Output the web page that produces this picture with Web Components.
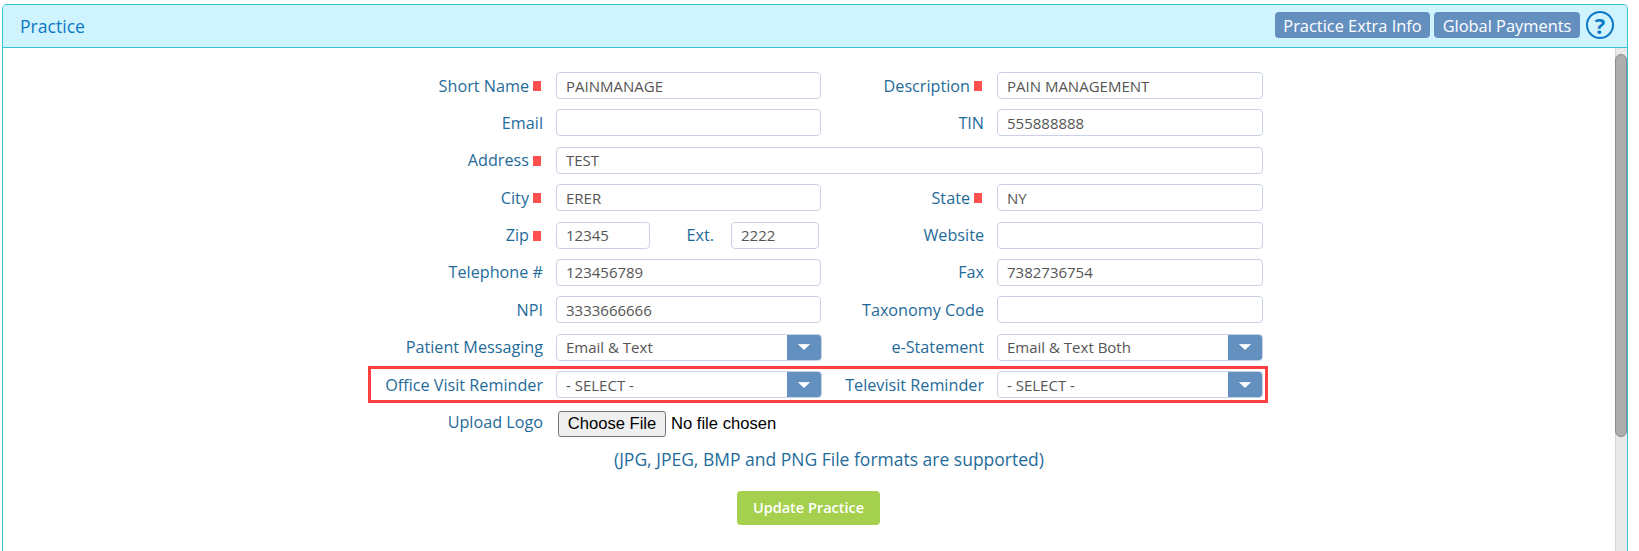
<!DOCTYPE html>
<html>
<head>
<meta charset="utf-8">
<title>Practice</title>
<style>
	html, body { margin: 0; height: 100%; overflow: hidden; background: #fff; }
	body { font-family: "Open Sans", sans-serif; }
</style>
</head>
<body>
<pm-panel>
	<span slot="title">Practice</span>
	<pm-button slot="actions" style="width:155px">Practice Extra Info</pm-button>
	<pm-button slot="actions" style="width:146px">Global Payments</pm-button>
	<pm-help slot="actions"></pm-help>

	<pm-form>
		<pm-row>
			<pm-field label="Short Name" required><pm-input>PAINMANAGE</pm-input></pm-field>
			<pm-field side="right" label="Description" required><pm-input style="width:265.5px">PAIN MANAGEMENT</pm-input></pm-field>
		</pm-row>
		<pm-row>
			<pm-field label="Email"><pm-input></pm-input></pm-field>
			<pm-field side="right" label="TIN"><pm-input style="width:265.5px">555888888</pm-input></pm-field>
		</pm-row>
		<pm-row>
			<pm-field label="Address" required><pm-input style="width:706.5px">TEST</pm-input></pm-field>
		</pm-row>
		<pm-row>
			<pm-field label="City" required><pm-input>ERER</pm-input></pm-field>
			<pm-field side="right" label="State" required><pm-input style="width:265.5px">NY</pm-input></pm-field>
		</pm-row>
		<pm-row>
			<pm-field label="Zip" required>
				<pm-input style="width:93.5px">12345</pm-input>
				<pm-label style="width:44.5px;margin-left:37px">Ext.</pm-label>
				<pm-input style="width:88px">2222</pm-input>
			</pm-field>
			<pm-field side="right" label="Website"><pm-input style="width:265.5px"></pm-input></pm-field>
		</pm-row>
		<pm-row>
			<pm-field label="Telephone #"><pm-input>123456789</pm-input></pm-field>
			<pm-field side="right" label="Fax"><pm-input style="width:265.5px">7382736754</pm-input></pm-field>
		</pm-row>
		<pm-row>
			<pm-field label="NPI"><pm-input>3333666666</pm-input></pm-field>
			<pm-field side="right" label="Taxonomy Code"><pm-input style="width:265.5px"></pm-input></pm-field>
		</pm-row>
		<pm-row>
			<pm-field label="Patient Messaging"><pm-select>Email &amp; Text</pm-select></pm-field>
			<pm-field side="right" label="e-Statement"><pm-select>Email &amp; Text Both</pm-select></pm-field>
		</pm-row>
		<pm-row>
			<pm-field label="Office Visit Reminder"><pm-select>- SELECT -</pm-select></pm-field>
			<pm-field side="right" label="Televisit Reminder"><pm-select>- SELECT -</pm-select></pm-field>
		</pm-row>
		<pm-row>
			<pm-field label="Upload Logo"><pm-file></pm-file></pm-field>
		</pm-row>
		<pm-note slot="footer">(JPG, JPEG, BMP and PNG File formats are supported)</pm-note>
		<pm-submit slot="footer">Update Practice</pm-submit>
	</pm-form>
	<pm-highlight slot="overlay"></pm-highlight>
</pm-panel>

<script>
class PmPanel extends HTMLElement {
	constructor() {
		super();
		this.attachShadow({ mode: "open" });
		this.shadowRoot.innerHTML = `
		<style>
			:host { display: flex; flex-direction: column; position: absolute; left: 2px; top: 4px; width: 1626px; height: 547px; box-sizing: border-box;
				border: 1px solid #33c4d6; border-bottom: 0; border-radius: 5px 5px 0 0; overflow: hidden; }
			header { display: flex; align-items: center; justify-content: space-between; flex: none; height: 43px; box-sizing: border-box;
				background: #cff3ff; border-bottom: 1px solid #33c4d6; padding: 0 13px 2px 17px; }
			.title { font-size: 17.6px; color: #0d78c4; margin-top: 2px; }
			.actions { display: flex; align-items: center; gap: 4px; }
			.main { display: flex; flex: 1; min-height: 0; position: relative; }
			.content { flex: 1; min-width: 0; padding-top: 24px; }
			.track { flex: none; width: 12px; box-sizing: border-box; background: #e9e9e9; border-left: 1px solid #d4d4d4; padding-top: 6px; }
			.thumb { height: 383px; box-sizing: border-box; background: #adadad; border: 1px solid #8c8c8c; border-radius: 6px; margin-left: -1px; }
		</style>
		<header>
			<div class="title"><slot name="title"></slot></div>
			<div class="actions"><slot name="actions"></slot></div>
		</header>
		<div class="main">
			<div class="content"><slot></slot></div>
			<div class="track"><div class="thumb"></div></div>
			<slot name="overlay"></slot>
		</div>`;
	}
}
customElements.define("pm-panel", PmPanel);

class PmButton extends HTMLElement {
	constructor() {
		super();
		this.attachShadow({ mode: "open" });
		this.shadowRoot.innerHTML = `
		<style>
			:host { display: inline-flex; align-items: center; justify-content: center; height: 26px; box-sizing: border-box;
				background: #6490c0; color: #fff; border-radius: 4px; font-size: 16.4px; white-space: nowrap; }
		</style>
		<slot></slot>`;
	}
}
customElements.define("pm-button", PmButton);

class PmHelp extends HTMLElement {
	constructor() {
		super();
		this.attachShadow({ mode: "open" });
		this.shadowRoot.innerHTML = `
		<style>
			:host { display: inline-flex; align-items: center; justify-content: center; width: 28px; height: 28px; margin-left: 2px; box-sizing: border-box;
				border: 2.5px solid #0d78c4; border-radius: 50%; color: #0d78c4; font: 700 22px "Open Sans", sans-serif; line-height: 1; }
		</style>
		?`;
	}
}
customElements.define("pm-help", PmHelp);

class PmForm extends HTMLElement {
	constructor() {
		super();
		this.attachShadow({ mode: "open" });
		this.shadowRoot.innerHTML = `
		<style>
			:host { display: block; }
			.rows { display: flex; flex-direction: column; padding-left: 360px; }
			.footer { display: flex; flex-direction: column; align-items: flex-start; }
		</style>
		<div class="rows"><slot></slot></div>
		<div class="footer"><slot name="footer"></slot></div>`;
	}
}
customElements.define("pm-form", PmForm);

class PmRow extends HTMLElement {
	constructor() {
		super();
		this.attachShadow({ mode: "open" });
		this.shadowRoot.innerHTML = `
		<style>
			:host { display: flex; height: 37.4px; }
		</style>
		<slot></slot>`;
	}
}
customElements.define("pm-row", PmRow);

class PmLabel extends HTMLElement {
	constructor() {
		super();
		this.attachShadow({ mode: "open" });
		this.shadowRoot.innerHTML = `
		<style>
			:host { display: inline-flex; align-items: center; flex: none; height: 27px; color: #1f6b9a; font-size: 16.2px; white-space: nowrap; }
		</style>
		<slot></slot>`;
	}
}
customElements.define("pm-label", PmLabel);

class PmField extends HTMLElement {
	constructor() {
		super();
		this.attachShadow({ mode: "open" });
	}

	connectedCallback() {
		const right = this.getAttribute("side") == "right";
		const required = this.hasAttribute("required");
		this.shadowRoot.innerHTML = `
		<style>
			:host { display: flex; align-items: flex-start; }
			.label { display: flex; justify-content: flex-end; align-items: center; width: ${right ? 163 : 180}px; height: 27px; margin-right: 13px; flex: none; }
			.req { width: 8px; height: 10px; margin: 1px 2px 0 4px; background: #ff5050; flex: none; }
			.control { display: flex; align-items: flex-start; width: 265px; }
		</style>
		<div class="label"><pm-label>${this.getAttribute("label")}</pm-label>${required ? '<span class="req"></span>' : ""}</div>
		<div class="control"><slot></slot></div>`;
	}
}
customElements.define("pm-field", PmField);

class PmInput extends HTMLElement {
	constructor() {
		super();
		this.attachShadow({ mode: "open" });
		this.shadowRoot.innerHTML = `
		<style>
			:host { display: flex; align-items: center; flex: none; width: 265px; height: 27px; box-sizing: border-box; padding: 0 9px;
				background: #fff; border: 1px solid #c9d2e4; border-radius: 4px; color: #555; font-size: 15px; white-space: nowrap; }
		</style>
		<slot></slot>`;
	}
}
customElements.define("pm-input", PmInput);

class PmSelect extends HTMLElement {
	constructor() {
		super();
		this.attachShadow({ mode: "open" });
		this.shadowRoot.innerHTML = `
		<style>
			:host { display: flex; align-items: stretch; flex: none; width: 265.5px; height: 27px; box-sizing: border-box;
				background: #fff; border: 1px solid #c9d2e4; border-radius: 4px; color: #555; font-size: 15px; white-space: nowrap; overflow: hidden; }
			.text { flex: 1; display: flex; align-items: center; padding-left: 9px; }
			.arrow { flex: none; width: 35px; margin: -1px -1px -1px 0; background: #6490c0; display: flex; align-items: center; justify-content: center; }
		</style>
		<div class="text"><slot></slot></div>
		<div class="arrow"><svg width="12" height="6" viewBox="0 0 12 6"><path d="M0.3 0.3h11.4L6 5.7z" fill="#fff" stroke="#fff" stroke-width="0.5" stroke-linejoin="round"/></svg></div>`;
	}
}
customElements.define("pm-select", PmSelect);

class PmFile extends HTMLElement {
	constructor() {
		super();
		this.attachShadow({ mode: "open" });
		this.shadowRoot.innerHTML = `
		<style>
			:host { display: flex; align-items: center; flex: none; gap: 5px; margin: 2px 0 0 2px; color: #000; font: 16.6px "Liberation Sans", Arial, sans-serif; white-space: nowrap; }
			button { width: 108px; height: 26px; padding: 0; box-sizing: border-box; background: #efefef; border: 1px solid #767676; border-radius: 3px; color: #000; font: inherit; }
		</style>
		<button type="button">Choose File</button><span>No file chosen</span>`;
	}
}
customElements.define("pm-file", PmFile);

class PmNote extends HTMLElement {
	constructor() {
		super();
		this.attachShadow({ mode: "open" });
		this.shadowRoot.innerHTML = `
		<style>
			:host { display: block; margin: 2px 0 0 611px; color: #1f6b9a; font-size: 17.5px; line-height: 22px; white-space: nowrap; }
		</style>
		<slot></slot>`;
	}
}
customElements.define("pm-note", PmNote);

class PmSubmit extends HTMLElement {
	constructor() {
		super();
		this.attachShadow({ mode: "open" });
		this.shadowRoot.innerHTML = `
		<style>
			:host { display: flex; align-items: center; justify-content: center; width: 143px; height: 34px; margin: 21px 0 0 734px;
				background: #a5d04e; color: #fff; border-radius: 4px; font-size: 14.5px; font-weight: 600; white-space: nowrap; }
		</style>
		<slot></slot>`;
	}
}
customElements.define("pm-submit", PmSubmit);

// red annotation frame drawn over the reminder row
class PmHighlight extends HTMLElement {
	constructor() {
		super();
		this.attachShadow({ mode: "open" });
		this.shadowRoot.innerHTML = `
		<style>
			:host { position: absolute; left: 365px; top: 318px; width: 900px; height: 37px; box-sizing: border-box; border: 3px solid #ff4040; pointer-events: none; }
		</style>`;
	}
}
customElements.define("pm-highlight", PmHighlight);
</script>
</body>
</html>
